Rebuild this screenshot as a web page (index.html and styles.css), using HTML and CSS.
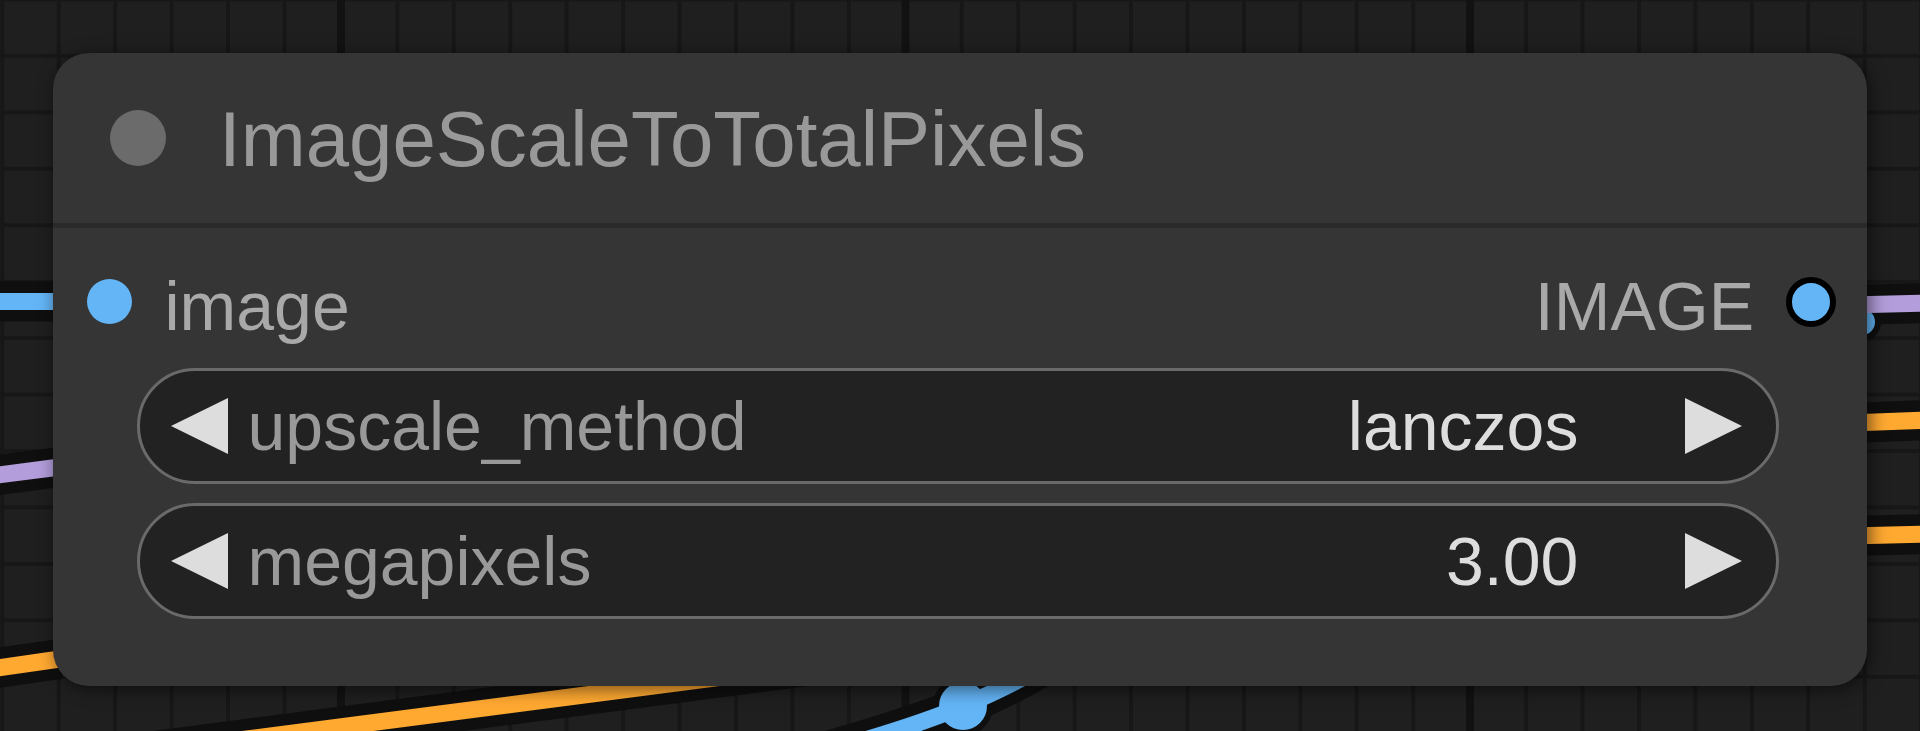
FILE: index.html
```html
<!DOCTYPE html>
<html>
<head>
<meta charset="utf-8">
<link rel="stylesheet" href="styles.css">
</head>
<body>
<div class="canvas">
  <svg class="wires" width="1920" height="731" viewBox="0 0 1920 731">
    <g class="outline">
      <path d="M-10 301.5 L60 301.5"/>
      <path d="M-10 476 L60 467"/>
      <path d="M-10 669 L60 659"/>
      <path d="M0 771 L900 654"/>
      <path d="M740 775 Q 900 733 963 706 T 1060 655"/>
      <circle cx="963" cy="706" r="30"/>
      <path d="M1850 305 L1930 303"/>
      <path d="M1850 423 L1930 420"/>
      <path d="M1850 536 L1930 534"/>
      <circle cx="1862" cy="322" r="19"/>
    </g>
    <path class="w blue" d="M-10 301.5 L60 301.5"/>
    <path class="w purple" d="M-10 476 L60 467"/>
    <path class="w orange" d="M-10 669 L60 659"/>
    <path class="w orange" d="M0 771 L900 654"/>
    <path class="w blue" d="M740 775 Q 900 733 963 706 T 1060 655"/>
    <circle class="dot-blue" cx="963" cy="706" r="24"/>
    <circle class="dot-blue" cx="1862" cy="322" r="13"/>
    <path class="w purple" d="M1850 305 L1930 303"/>
    <path class="w orange" d="M1850 423 L1930 420"/>
    <path class="w orange" d="M1850 536 L1930 534"/>
  </svg>

  <div class="node">
    <div class="title">
      <span class="title-dot"></span>
      <span class="title-text">ImageScaleToTotalPixels</span>
    </div>
    <div class="body">
      <div class="slots">
        <div class="slot-in">
          <span class="slot-dot"></span>
          <span class="slot-label">image</span>
        </div>
        <div class="slot-out">
          <span class="slot-label">IMAGE</span>
          <span class="slot-dot connected"></span>
        </div>
      </div>
      <div class="widget">
        <svg class="arrow" width="57" height="56" viewBox="0 0 57 56"><polygon points="0,28 57,0 57,56"/></svg>
        <span class="w-label">upscale_method</span>
        <span class="w-value">lanczos</span>
        <svg class="arrow" width="57" height="56" viewBox="0 0 57 56"><polygon points="57,28 0,0 0,56"/></svg>
      </div>
      <div class="widget">
        <svg class="arrow" width="57" height="56" viewBox="0 0 57 56"><polygon points="0,28 57,0 57,56"/></svg>
        <span class="w-label">megapixels</span>
        <span class="w-value">3.00</span>
        <svg class="arrow" width="57" height="56" viewBox="0 0 57 56"><polygon points="57,28 0,0 0,56"/></svg>
      </div>
    </div>
  </div>
</div>
</body>
</html>
```

FILE: styles.css
```css
* { box-sizing: border-box; }
html, body {
  margin: 0;
  padding: 0;
  width: 1920px;
  height: 731px;
  overflow: hidden;
  background: #1e1e1e;
  font-family: "Liberation Sans", Arial, sans-serif;
}
.canvas {
  position: relative;
  width: 1920px;
  height: 731px;
  overflow: hidden;
  background-color: #1f1f1f;
  background-image:
    linear-gradient(to right, #121212 8px, transparent 8px),
    linear-gradient(to right, #171717 4px, transparent 4px),
    linear-gradient(to bottom, #171717 4px, transparent 4px);
  background-size: 564.5px 100%, 56.45px 100%, 100% 56.45px;
  background-position: 337px 0, 0.3px 0, 0 -2.5px;
}
.wires {
  position: absolute;
  left: 0;
  top: 0;
}
.wires .outline path {
  stroke: #0f0f0f;
  stroke-width: 40;
  fill: none;
}
.wires .outline circle {
  fill: #0f0f0f;
}
.w {
  fill: none;
  stroke-width: 17;
}
.blue { stroke: #64b5f6; }
.purple { stroke: #b39ddb; }
.orange { stroke: #ffa931; }
.dot-blue { fill: #64b5f6; }

.node {
  position: absolute;
  left: 53px;
  top: 53px;
  width: 1814px;
  height: 633px;
  background: #353535;
  border-radius: 36px;
  box-shadow: 3px 3px 18px rgba(0, 0, 0, 0.55);
  display: flex;
  flex-direction: column;
}
.title {
  height: 175px;
  border-bottom: 5px solid #2a2a2a;
  display: flex;
  align-items: center;
  padding-left: 56.5px;
}
.title-dot {
  width: 56px;
  height: 56px;
  border-radius: 50%;
  background: #6b6b6b;
  flex: none;
}
.title-text {
  margin-left: 53.5px;
  font-size: 78px;
  color: #999999;
  padding-top: 2px;
  white-space: nowrap;
}
.body {
  display: flex;
  flex-direction: column;
  padding: 17px 88px 0 84px;
}
.slots {
  height: 113px;
  margin: 0 -57px 10px -50.5px;
  display: flex;
  align-items: center;
  justify-content: space-between;
}
.slot-in, .slot-out {
  display: flex;
  align-items: center;
}
.slot-dot {
  width: 45px;
  height: 45px;
  border-radius: 50%;
  background: #64b5f6;
  flex: none;
}
.slot-dot.connected {
  width: 50px;
  height: 50px;
  border: 6px solid #000;
}
.slot-in .slot-label { margin-left: 33px; }
.slot-out .slot-label { margin-right: 32px; }
.slot-label {
  font-size: 68px;
  color: #a9a9a9;
  padding-top: 8px;
  white-space: nowrap;
}
.widget {
  height: 116px;
  border: 3px solid #6a6a6a;
  border-radius: 58px;
  background: #222222;
  display: flex;
  align-items: center;
  padding: 0 33.6px 0 31px;
  margin-bottom: 19px;
}
.arrow {
  flex: none;
  fill: #dddddd;
}
.w-label {
  margin-left: 19.5px;
  font-size: 68px;
  color: #999999;
  flex: 1;
  white-space: nowrap;
}
.w-value {
  margin-right: 107px;
  font-size: 68px;
  color: #dddddd;
  white-space: nowrap;
}
```
